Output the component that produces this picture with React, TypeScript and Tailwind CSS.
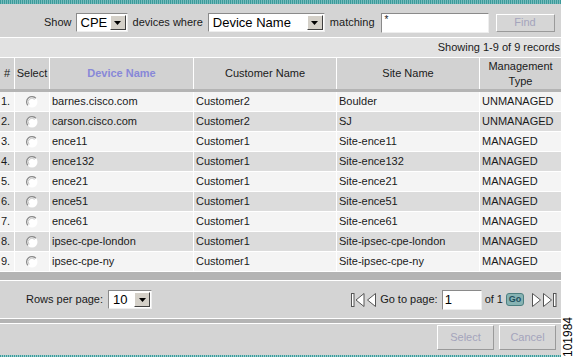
import React from 'react';

type Row = { device: string; customer: string; site: string; mgmt: string };

const rows: Row[] = [
  { device: 'barnes.cisco.com', customer: 'Customer2', site: 'Boulder', mgmt: 'UNMANAGED' },
  { device: 'carson.cisco.com', customer: 'Customer2', site: 'SJ', mgmt: 'UNMANAGED' },
  { device: 'ence11', customer: 'Customer1', site: 'Site-ence11', mgmt: 'MANAGED' },
  { device: 'ence132', customer: 'Customer1', site: 'Site-ence132', mgmt: 'MANAGED' },
  { device: 'ence21', customer: 'Customer1', site: 'Site-ence21', mgmt: 'MANAGED' },
  { device: 'ence51', customer: 'Customer1', site: 'Site-ence51', mgmt: 'MANAGED' },
  { device: 'ence61', customer: 'Customer1', site: 'Site-ence61', mgmt: 'MANAGED' },
  { device: 'ipsec-cpe-london', customer: 'Customer1', site: 'Site-ipsec-cpe-london', mgmt: 'MANAGED' },
  { device: 'ipsec-cpe-ny', customer: 'Customer1', site: 'Site-ipsec-cpe-ny', mgmt: 'MANAGED' },
];

const cols = 'grid grid-cols-[14px_34px_143px_142px_142px_81px] gap-x-px';

const DropArrow = () => (
  <div className="flex h-full w-[16px] items-center justify-center border border-t-white border-l-white border-r-[#404040] border-b-[#404040] bg-[#d4d0c8]">
    <svg width="7" height="4" viewBox="0 0 7 4">
      <path d="M0 0 H7 L3.5 4 Z" fill="#000" />
    </svg>
  </div>
);

const Dropdown = ({ value, width }: { value: string; width: string }) => (
  <div className={`flex h-[19px] ${width} border border-t-[#8a8a8a] border-l-[#8a8a8a] border-b-[#eeeeee] border-r-[#eeeeee] bg-white p-px`}>
    <span className="flex-1 pl-[3px] text-[13px] leading-[15px] text-black">{value}</span>
    <DropArrow />
  </div>
);

const Radio = () => (
  <svg width="12" height="12" viewBox="0 0 12 12">
    <circle cx="6" cy="6" r="5.5" fill="#fff" />
    <path d="M9.8 2.3 A5 5 0 0 0 2 9.4" stroke="#8c8c8c" strokeWidth="1.3" fill="none" />
    <path d="M8.6 3.4 A3.6 3.6 0 0 0 3.2 8.4" stroke="#c4c4c4" strokeWidth="1" fill="none" />
  </svg>
);

const DisabledButton = ({ label, className }: { label: string; className: string }) => (
  <div className={`flex items-center justify-center border border-t-white border-l-white border-r-[#9a9a9a] border-b-[#9a9a9a] bg-[#d6d6d6] text-[11px] text-[#a4a4bc] ${className}`}>
    {label}
  </div>
);

const NavIcon = ({ dir, bar }: { dir: 'left' | 'right'; bar?: boolean }) => (
  <svg width={bar ? 14 : 9} height="14" viewBox={bar ? '0 0 14 14' : '0 0 9 14'}>
    {dir === 'left' ? (
      <>
        {bar && <rect x="0.5" y="0.5" width="2.5" height="13" fill="#fff" stroke="#555" strokeWidth="1" />}
        <path d={bar ? 'M13 0.5 L5 7 L13 13.5 Z' : 'M8.5 0.5 L0.5 7 L8.5 13.5 Z'} fill="#fff" stroke="#555" strokeWidth="1" />
      </>
    ) : (
      <>
        <path d="M0.5 0.5 L8.5 7 L0.5 13.5 Z" fill="#fff" stroke="#555" strokeWidth="1" />
        {bar && <rect x="10.5" y="0.5" width="2.5" height="13" fill="#fff" stroke="#555" strokeWidth="1" />}
      </>
    )}
  </svg>
);

export default function App() {
  return (
    <div className="flex h-[359px] w-[575px] bg-white font-['Liberation_Sans',Arial,sans-serif] text-[11px] text-[#1a1a1a]">
      <div className="flex w-[561px] flex-col">
        {/* top band */}
        <div className="h-[4px] bg-[repeating-linear-gradient(90deg,#3c9a9a_0px,#3c9a9a_1px,#78bcbc_1px,#78bcbc_2px)]" />

        {/* filter */}
        <div className="flex h-[33px] items-center bg-[#d4d4d4] pl-[44px] pt-[4px]">
          <span>Show</span>
          <div className="ml-[4px]">
            <Dropdown value="CPE" width="w-[52px]" />
          </div>
          <span className="ml-[5px]">devices where</span>
          <div className="ml-[5px]">
            <Dropdown value="Device Name" width="w-[117px]" />
          </div>
          <span className="ml-[5px]">matching</span>
          <div className="ml-[6px] h-[20px] w-[108px] border border-t-[#8a8a8a] border-l-[#8a8a8a] border-b-[#eeeeee] border-r-[#eeeeee] bg-white pl-[3px] text-[10px] leading-[12px]">
            *
          </div>
          <DisabledButton label="Find" className="ml-[7px] h-[18px] w-[59px]" />
        </div>
        <div className="h-px bg-white" />

        {/* record count */}
        <div className="flex h-[19px] items-center justify-end bg-[#e2e2e2] pr-px">Showing 1-9 of 9 records</div>
        <div className="h-px bg-white" />

        {/* header */}
        <div className={`${cols} h-[31px] bg-white`}>
          <div className="flex items-center justify-center bg-[#d2d2d2]">#</div>
          <div className="flex items-center justify-center bg-[#d2d2d2]">Select</div>
          <div className="flex items-center justify-center bg-[#d2d2d2] font-bold text-[#8888d8]">Device Name</div>
          <div className="flex items-center justify-center bg-[#d2d2d2]">Customer Name</div>
          <div className="flex items-center justify-center bg-[#d2d2d2]">Site Name</div>
          <div className="flex items-center justify-center bg-[#d2d2d2] text-center leading-[15px]">
            Management
            <br />
            Type
          </div>
        </div>
        <div className="h-[3px] bg-[#b4b4b4]" />

        {/* rows */}
        <div className="flex flex-col bg-white">
          {rows.map((r, i) => (
            <div key={r.device} className={`${cols} h-[20px] border-b border-white bg-white`}>
              {[`${i + 1}.`, null, r.device, r.customer, r.site, r.mgmt].map((c, j) => (
                <div
                  key={j}
                  className={`flex items-center ${i % 2 ? 'bg-[#dcdcdc]' : 'bg-[#f4f4f4]'} ${j === 0 ? 'pl-px' : j === 1 ? 'justify-center' : 'pl-[2px]'}`}
                >
                  {j === 1 ? <Radio /> : c}
                </div>
              ))}
            </div>
          ))}
        </div>
        <div className="h-[8px] bg-[#b4b4b4]" />
        <div className="h-px bg-white" />

        {/* paging */}
        <div className="flex h-[37px] items-center bg-[#d4d4d4] pl-[26px]">
          <span>Rows per page:</span>
          <div className="ml-[5px]">
            <Dropdown value="10" width="w-[44px]" />
          </div>
          <div className="ml-auto flex items-center pr-[4px]">
            <NavIcon dir="left" bar />
            <div className="ml-[2px]">
              <NavIcon dir="left" />
            </div>
            <span className="ml-[4px]">Go to page:</span>
            <div className="ml-[4px] h-[20px] w-[40px] border border-t-[#8a8a8a] border-l-[#8a8a8a] border-b-[#eeeeee] border-r-[#eeeeee] bg-white pl-[2px] text-[13px] leading-[17px] text-black">
              1
            </div>
            <span className="ml-[3px]">of 1</span>
            <div className="ml-[3px] flex h-[13px] w-[18px] items-center justify-center rounded-[3px] border border-[#4d7f80] bg-[#87b3b3] text-[9px] font-bold leading-none text-[#1f4f5e]">
              Go
            </div>
            <div className="ml-[8px]">
              <NavIcon dir="right" />
            </div>
            <div className="ml-[2px]">
              <NavIcon dir="right" bar />
            </div>
          </div>
        </div>
        <div className="h-px bg-white" />
        <div className="h-[4px] bg-[#b4b4b4]" />
        <div className="h-px bg-white" />

        {/* actions */}
        <div className="flex h-[31px] items-start justify-end gap-[5px] bg-[#d4d4d4] pr-[5px] pt-px">
          <DisabledButton label="Select" className="h-[25px] w-[57px]" />
          <DisabledButton label="Cancel" className="h-[25px] w-[57px]" />
        </div>
        <div className="h-[2px] bg-[repeating-linear-gradient(90deg,#3c9a9a_0px,#3c9a9a_1px,#9ccfcf_1px,#9ccfcf_2px)]" />
      </div>

      {/* figure number */}
      <div className="flex w-[14px] flex-col justify-end pb-[2px] pl-px">
        <span className="rotate-180 text-[12px] leading-[12px] text-black [writing-mode:vertical-rl]">101984</span>
      </div>
    </div>
  );
}
